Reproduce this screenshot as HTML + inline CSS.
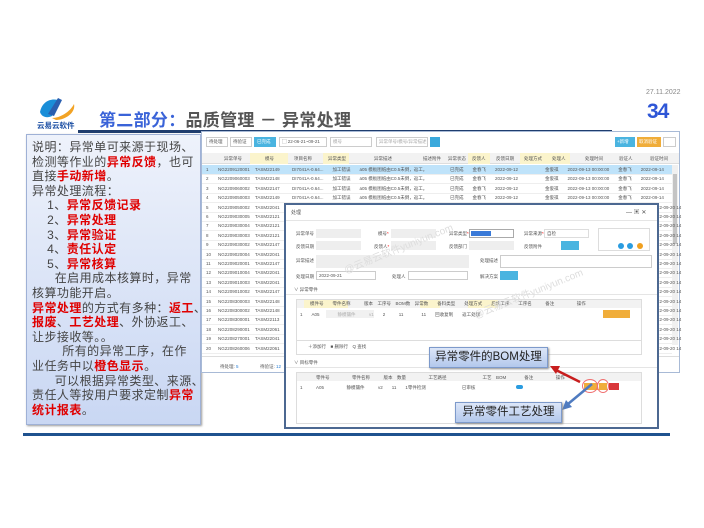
<!DOCTYPE html>
<html><head><meta charset="utf-8"><style>
*{margin:0;padding:0;box-sizing:border-box}
body{width:704px;height:528px;background:#fff;position:relative;overflow:hidden;font-family:"Liberation Sans","Noto Sans CJK SC",sans-serif}
.a{position:absolute}
.t{font-size:4.5px;color:#555;white-space:nowrap;line-height:1}
.r{color:#e00000;font-weight:bold}
</style></head><body>
<div class="a" style="left:646px;top:89px;font-size:7px;color:#888">27.11.2022</div>
<div class="a" style="left:647px;top:100px;font-size:21px;font-weight:bold;color:#2e56d6;letter-spacing:-1px">34</div>
<svg class="a" style="left:34px;top:92px" width="46" height="40" viewBox="0 0 46 40">
<path d="M6 20 C8 10 16 6 24 8 L18 24 C14 26 8 26 6 20Z" fill="#1a8ed8"/>
<path d="M14 22 L24 6 L28 8 L20 24Z" fill="#2a5fb0"/>
<path d="M18 26 C26 26 36 20 40 12 C42 20 32 28 22 28Z" fill="#f2a325"/>
<text x="3" y="36" font-size="7.5" font-weight="bold" fill="#1b4ea3" font-family="Noto Sans CJK SC">云易云软件</text>
</svg>
<div class="a" style="left:99px;top:106px;font-size:17px;font-weight:bold;color:#555;white-space:nowrap;letter-spacing:0.3px"><span style="color:#3a63d8">第二部分：</span>品质管理 － 异常处理</div>
<div class="a" style="left:78px;top:130px;width:534px;height:3px;background:#1f3d6e"></div>
<div class="a" style="left:26px;top:134px;width:175px;height:291px;background:linear-gradient(#eef2fb,#c9d7f3);border:1px solid #9fb1d6;box-shadow:1px 1px 2px #999;padding:5px 0 0 5px;font-size:12px;letter-spacing:0.45px;line-height:14.6px;color:#444;white-space:nowrap">
说明：异常单可来源于现场、<br>检测等作业的<span class="r">异常反馈</span>，也可<br>直接<span class="r">手动新增</span>。<br>异常处理流程：<br>&nbsp;&nbsp;&nbsp;&nbsp;1、<span class="r">异常反馈记录</span><br>&nbsp;&nbsp;&nbsp;&nbsp;2、<span class="r">异常处理</span><br>&nbsp;&nbsp;&nbsp;&nbsp;3、<span class="r">异常验证</span><br>&nbsp;&nbsp;&nbsp;&nbsp;4、<span class="r">责任认定</span><br>&nbsp;&nbsp;&nbsp;&nbsp;5、<span class="r">异常核算</span><br>&nbsp;&nbsp;&nbsp;&nbsp;&nbsp;&nbsp;在启用成本核算时，异常<br>核算功能开启。<br><span class="r">异常处理</span>的方式有多种：<span class="r">返工</span>、<br><span class="r">报废</span>、<span class="r">工艺处理</span>、外协返工、<br>让步接收等。。<br>&nbsp;&nbsp;&nbsp;&nbsp;&nbsp;&nbsp;&nbsp;&nbsp;所有的异常工序，在作<br>业任务中以<span class="r">橙色显示</span>。<br>&nbsp;&nbsp;&nbsp;&nbsp;&nbsp;&nbsp;可以根据异常类型、来源、<br>责任人等按用户要求定制<span class="r">异常<br>统计报表</span>。
</div>
<div class="a" style="left:201px;top:131px;width:479px;height:242px;border:1px solid #a8bad6;background:#fff">
 <div class="a" style="left:4px;top:5px;width:22px;height:10px;border:1px solid #ccc"></div><div class="a t" style="left:7px;top:8px">待处理</div>
 <div class="a" style="left:28px;top:5px;width:22px;height:10px;border:1px solid #ccc"></div><div class="a t" style="left:31px;top:8px">待验证</div>
 <div class="a" style="left:52px;top:5px;width:22px;height:10px;background:#4ab4e0"></div><div class="a t" style="left:55px;top:8px;color:#fff">已完成</div>
 <div class="a" style="left:77px;top:5px;width:48px;height:10px;border:1px solid #ccc"></div><div class="a t" style="left:80px;top:8px">▢ 22-06-21~09-21</div>
 <div class="a" style="left:128px;top:5px;width:42px;height:10px;border:1px solid #ccc"></div><div class="a t" style="left:131px;top:8px;color:#aaa">模号</div>
 <div class="a" style="left:174px;top:5px;width:52px;height:10px;border:1px solid #ccc"></div><div class="a t" style="left:177px;top:8px;color:#aaa">异常单号/模号/异常描述</div>
 <div class="a" style="left:228px;top:5px;width:10px;height:10px;background:#3aa9dc"></div>
 <div class="a" style="left:413px;top:5px;width:20px;height:10px;background:#4ab4e0"></div><div class="a t" style="left:415px;top:8px;color:#fff">+新增</div>
 <div class="a" style="left:435px;top:5px;width:24px;height:10px;background:#f0ad3a"></div><div class="a t" style="left:437px;top:8px;color:#fff">取消验证</div>
 <div class="a" style="left:461px;top:5px;width:13px;height:10px;border:1px solid #ccc"></div>
 <div class="a" style="left:0;top:21px;width:477px;height:11px;background:#f2f2f2;border-bottom:1px solid #ddd"></div>
 <div class="a" style="left:48px;top:21px;width:38px;height:11px;background:#fbf4cc"></div>
 <div class="a" style="left:121px;top:21px;width:26px;height:11px;background:#fbf4cc"></div>
 <div class="a" style="left:266px;top:21px;width:22px;height:11px;background:#fbf4cc"></div>
 <div class="a" style="left:318px;top:21px;width:28px;height:11px;background:#fbf4cc"></div>
 <div class="a" style="left:346px;top:21px;width:22px;height:11px;background:#fbf4cc"></div>
 <div class="a t" style="left:22px;top:25px">异常单号</div><div class="a t" style="left:63px;top:25px">模号</div><div class="a t" style="left:92px;top:25px">项目名称</div><div class="a t" style="left:126px;top:25px">异常类型</div><div class="a t" style="left:172px;top:25px">异常描述</div><div class="a t" style="left:221px;top:25px">描述附件</div><div class="a t" style="left:246px;top:25px">异常状态</div><div class="a t" style="left:270px;top:25px">反馈人</div><div class="a t" style="left:294px;top:25px">反馈日期</div><div class="a t" style="left:322px;top:25px">处理方式</div><div class="a t" style="left:350px;top:25px">处理人</div><div class="a t" style="left:383px;top:25px">处理时间</div><div class="a t" style="left:417px;top:25px">验证人</div><div class="a t" style="left:448px;top:25px">验证时间</div>
 <div class="a" style="left:0;top:33px;width:470px;height:9.4px;background:#bfe3fa"></div>
 <div class="a" style="left:470px;top:33px;width:6px;height:180px;background:#f0f0f0"></div>
 <div class="a" style="left:471px;top:42px;width:4px;height:70px;background:#c4c4c4"></div>
 <div id="rows"></div>
 <div class="a" style="left:0;top:224px;width:477px;height:1px;background:#ddd"></div>
 <div class="a t" style="left:18px;top:233px">待处理: <span style="color:#2a7fd4">5</span></div>
 <div class="a t" style="left:58px;top:233px">待验证: <span style="color:#2a7fd4">12</span></div>
</div>
<div class="a" style="left:284px;top:203px;width:375px;height:226px;border:2px solid #4c6891;background:#fff">
 <div class="a t" style="left:5px;top:6px;font-size:5px">处理</div>
 <div class="a t" style="left:340px;top:5px;font-size:6px">— ▣ ✕</div>
 <div class="a" style="left:0;top:15px;width:371px;height:1px;background:#e5e5e5"></div>
 <div class="a t" style="left:10px;top:27px">异常单号</div><div class="a" style="left:30px;top:24px;width:45px;height:9px;background:#eee"></div>
 <div class="a t" style="left:92px;top:27px">模号<span style="color:red">*</span></div><div class="a" style="left:105px;top:24px;width:45px;height:9px;background:#eee"></div>
 <div class="a t" style="left:163px;top:27px">异常类型<span style="color:red">*</span></div><div class="a" style="left:183px;top:24px;width:45px;height:9px;border:1px solid #aaa"></div><div class="a" style="left:185px;top:26px;width:20px;height:5px;background:#3a7ad8"></div>
 <div class="a t" style="left:238px;top:27px">异常来源<span style="color:red">*</span></div><div class="a" style="left:258px;top:24px;width:45px;height:9px;border:1px solid #ddd"></div><div class="a t" style="left:261px;top:27px">自检</div>
 <div class="a" style="left:312px;top:23px;width:52px;height:23px;border:1px solid #ddd"></div>
 <div class="a" style="left:332px;top:38px;width:6px;height:6px;border-radius:50%;background:#2a9ce0"></div><div class="a" style="left:341px;top:38px;width:6px;height:6px;border-radius:50%;background:#2a9ce0"></div><div class="a" style="left:351px;top:38px;width:6px;height:6px;border-radius:50%;background:#f0a020"></div>
 <div class="a t" style="left:10px;top:40px">反馈日期</div><div class="a" style="left:30px;top:36px;width:45px;height:9px;background:#eee"></div>
 <div class="a t" style="left:88px;top:40px">反馈人<span style="color:red">*</span></div><div class="a" style="left:105px;top:36px;width:45px;height:9px;background:#eee"></div>
 <div class="a t" style="left:163px;top:40px">反馈部门</div><div class="a" style="left:183px;top:36px;width:45px;height:9px;background:#eee"></div>
 <div class="a t" style="left:238px;top:40px">反馈附件</div><div class="a" style="left:275px;top:36px;width:18px;height:9px;background:#4ab4e0"></div>
 <div class="a t" style="left:10px;top:54px">异常描述</div><div class="a" style="left:30px;top:50px;width:153px;height:13px;background:#eee"></div>
 <div class="a t" style="left:194px;top:54px">处理描述</div><div class="a" style="left:214px;top:50px;width:152px;height:13px;border:1px solid #ccc"></div>
 <div class="a t" style="left:10px;top:70px">处理日期</div><div class="a" style="left:30px;top:66px;width:60px;height:9px;border:1px solid #ccc"></div><div class="a t" style="left:33px;top:69px">2022-09-21</div>
 <div class="a t" style="left:106px;top:70px">处理人</div><div class="a" style="left:122px;top:66px;width:60px;height:9px;border:1px solid #ccc"></div>
 <div class="a t" style="left:194px;top:70px">解决方案</div><div class="a" style="left:214px;top:66px;width:18px;height:9px;background:#4ab4e0"></div>
 <div class="a t" style="left:8px;top:83px">∨ 异常零件</div>
 <div class="a" style="left:0;top:89px;width:371px;height:1px;background:#e5e5e5"></div>
 <div class="a" style="left:10px;top:94px;width:346px;height:56px;border:1px solid #ddd"></div>
 <div class="a" style="left:11px;top:95px;width:344px;height:8px;background:#f2f2f2"></div>
 <div class="a" style="left:18px;top:95px;width:44px;height:8px;background:#fbf4cc"></div>
 <div class="a" style="left:134px;top:95px;width:20px;height:8px;background:#fbf4cc"></div>
 <div class="a" style="left:182px;top:95px;width:30px;height:8px;background:#fbf4cc"></div>
 <div class="a t" style="left:24px;top:97px">模件号　　零件名称　　　版本　工序号　BOM数　异常数　　备料类型　　处理方式　　后续工序　　工序名　　　备注　　　　　操作</div>
 <div class="a t" style="left:14px;top:108px">1　　A05　　　　静模镶件　　　v1　　2　　　11　　　　11　　回收复制　　返工处理</div>
 <div class="a" style="left:40px;top:105px;width:48px;height:8px;background:#e8e8e8;opacity:.6"></div>
 <div class="a" style="left:317px;top:105px;width:27px;height:8px;background:#f0ad3a"></div>
 <div class="a" style="left:10px;top:135px;width:346px;height:1px;background:#ddd"></div>
 <div class="a t" style="left:22px;top:140px">＋添加行　■ 删除行　Q 查找</div>
 <div class="a t" style="left:8px;top:156px">∨ 目标零件</div>
 <div class="a" style="left:0;top:162px;width:371px;height:1px;background:#e5e5e5"></div>
 <div class="a" style="left:10px;top:167px;width:346px;height:52px;border:1px solid #ddd"></div>
 <div class="a" style="left:11px;top:168px;width:344px;height:8px;background:#f2f2f2"></div>
 <div class="a t" style="left:30px;top:171px">零件号　　　　　零件名称　　　版本　数量　　　　　工艺路径　　　　　　　　工艺　BOM　　　　备注　　　　　操作</div>
 <div class="a t" style="left:14px;top:181px">1　　　A05　　　　　静模镶件　　　v2　　11　　1零件检测　　　　　　　　已审核</div>
 <div class="a" style="left:230px;top:180px;width:7px;height:4px;border-radius:2px;background:#2a9ce0"></div>
 <div class="a" style="left:298px;top:178px;width:14px;height:7px;background:#f0ad3a"></div>
 <div class="a" style="left:313px;top:178px;width:8px;height:7px;background:#f0ad3a"></div>
 <div class="a" style="left:323px;top:178px;width:10px;height:7px;background:#d9373a"></div>
 <div class="a" style="left:296px;top:174px;width:16px;height:14px;border:1px solid #f07070;border-radius:50%"></div>
 <div class="a" style="left:311px;top:174px;width:12px;height:14px;border:1px solid #f07070;border-radius:50%"></div>
</div>
<div class="a" style="left:340px;top:240px;font-size:10px;color:#ddd;transform:rotate(-22deg);white-space:nowrap">@云易云软件yuniyun.com</div>
<div class="a" style="left:470px;top:285px;font-size:10px;color:#ddd;transform:rotate(-22deg);white-space:nowrap">@云易云软件yuniyun.com</div>
<svg class="a" style="left:0;top:0" width="704" height="528">
<line x1="580" y1="382" x2="556" y2="370" stroke="#c81e1e" stroke-width="2.5"/>
<polygon points="550,366 560,366 556,374" fill="#c81e1e"/>
<line x1="592" y1="384" x2="568" y2="404" stroke="#4f7bc0" stroke-width="2.5"/>
<polygon points="562,410 566,400 572,407" fill="#4f7bc0"/>
</svg>
<div class="a" style="left:429px;top:347px;width:119px;height:21px;background:linear-gradient(#dce6f8,#b3c8ec);border:1px solid #7d9acb;box-shadow:1px 1px 2px #888;font-size:11.5px;color:#222;text-align:center;line-height:19px;white-space:nowrap">异常零件的BOM处理</div>
<div class="a" style="left:455px;top:402px;width:107px;height:21px;background:linear-gradient(#dce6f8,#b3c8ec);border:1px solid #7d9acb;box-shadow:1px 1px 2px #888;font-size:11.5px;color:#222;text-align:center;line-height:19px;white-space:nowrap">异常零件工艺处理</div>
<div class="a" style="left:23px;top:433px;width:647px;height:3px;background:#1f528f"></div>
<script>
var ids=["NG2209120001","NG2209060003","NG2209060002","NG2209050003","NG2209050002","NG2209030005","NG2209030004","NG2209030003","NG2209030002","NG2209020004","NG2209020001","NG2209010004","NG2209010003","NG2209010002","NG2208300003","NG2208300002","NG2208300001","NG2208290001","NG2208270001","NG2208260006"];
var m=["TASM22149","TASM22148","TASM22147","TASM22149","TASM22041","TASM22121","TASM22121","TASM22121","TASM22147","TASM22041","TASM22147","TASM22041","TASM22041","TASM22147","TASM22148","TASM22148","TASM22113","TASM22061","TASM22041","TASM22061"];
var h="";
for(var i=0;i<20;i++){var y=33+i*9.4;
h+='<div class="a" style="left:0;top:'+(y+9)+'px;width:470px;height:1px;background:#eee"></div>';
h+='<div class="a t" style="left:4px;top:'+(y+3)+'px">'+(i+1)+'</div><div class="a t" style="left:16px;top:'+(y+3)+'px">'+ids[i]+'</div><div class="a t" style="left:53px;top:'+(y+3)+'px">'+m[i]+'</div>';
if(i<4)h+='<div class="a t" style="left:90px;top:'+(y+3)+'px">DI7041A-0.64...　　加工错误　　a05 模板图纸由C0.5未倒，返工。</div><div class="a t" style="left:248px;top:'+(y+3)+'px">已完成　　金春飞　　2022-09-12　　　　　　金俊祺　　2022-09-13 00:00:00　　金春飞　　2022-09-14</div>';
else h+='<div class="a t" style="left:450px;top:'+(y+3)+'px">2022-09-20 14</div>';}
document.getElementById("rows").innerHTML=h;
</script>
</body></html>
